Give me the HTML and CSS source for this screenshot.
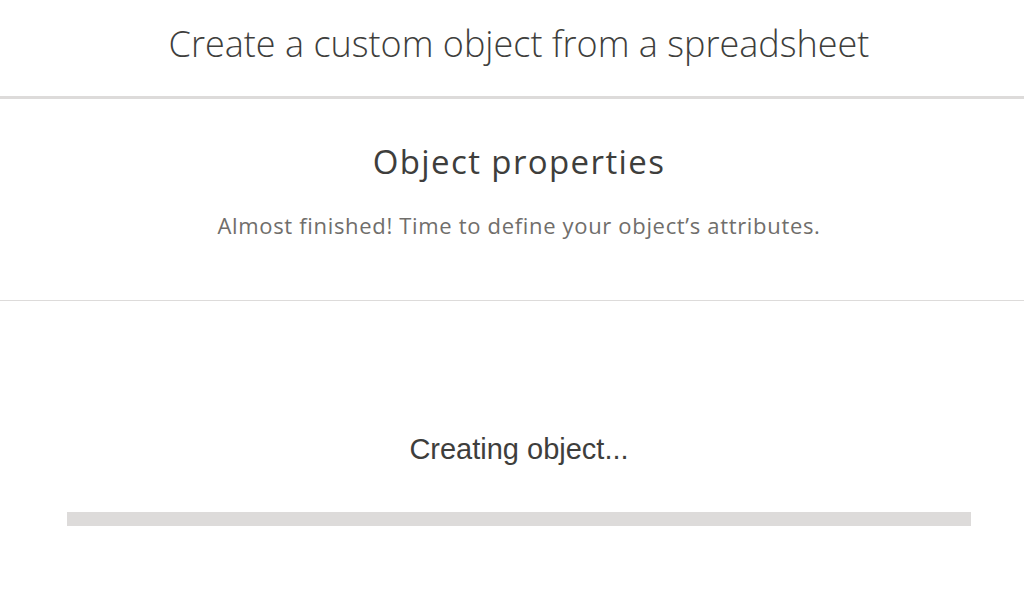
FILE: index.html
```html
<!DOCTYPE html>
<html>
<head>
<meta charset="utf-8">
<link rel="stylesheet" href="styles.css">
</head>
<body>
<header class="header">
  <h1 class="title">Create a custom object from a spreadsheet</h1>
</header>
<section class="intro">
  <h2 class="heading">Object properties</h2>
  <p class="subtitle">Almost finished! Time to define your object’s attributes.</p>
</section>
<section class="status">
  <p class="status-text">Creating object...</p>
  <div class="progress"><div class="progress-fill"></div></div>
</section>
</body>
</html>
```

FILE: styles.css
```css
* { box-sizing: border-box; }
html, body { margin: 0; padding: 0; background: #fff; }
body { font-family: "Open Sans", sans-serif; color: #3e3e3c; width: 1024px; height: 593px; overflow: hidden; }
.header { height: 99px; border-bottom: 3px solid #dddbda; display: flex; justify-content: center; padding: 21px 0 0 14px; }
.title { margin: 0; font-size: 36px; font-weight: 300; line-height: 46px; color: #3e3e3c; white-space: nowrap; }
.intro { height: 202px; border-bottom: 1px solid #dddbda; display: flex; flex-direction: column; align-items: center; padding: 41px 0 0 14px; }
.heading { margin: 0; font-size: 33px; font-weight: 400; line-height: 44px; letter-spacing: 1.4px; color: #3e3e3c; white-space: nowrap; }
.subtitle { margin: 28px 0 0; font-size: 22px; line-height: 26px; letter-spacing: 0.67px; color: #706e6b; white-space: nowrap; }
.status { display: flex; flex-direction: column; align-items: center; padding: 131px 0 0 14px; }
.status-text { margin: 0; font-family: "Liberation Sans", Arial, sans-serif; font-size: 29px; line-height: 34px; color: #3e3e3c; }
.progress { align-self: flex-start; margin: 46px 0 0 53px; width: 904px; height: 14px; background: #dddbda; }
.progress-fill { width: 0; height: 100%; }
```
